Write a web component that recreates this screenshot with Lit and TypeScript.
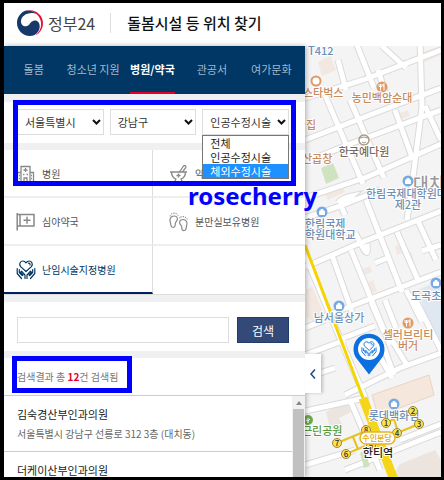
import { LitElement, html, css, svg } from "lit";
import { customElement, state } from "lit/decorators.js";

const heartHands = svg`
  <g fill="none" stroke="currentColor" stroke-width="1.2" stroke-linecap="round" stroke-linejoin="round">
    <path d="M10 11.500 4.600 6.600C2.600 4 4.400 1 7 1c1.400 0 2.300.8 3 1.800C10.700 1.800 11.600 1 13 1c2.600 0 4.400 3 2.400 5.600Z"/>
    <path d="M12.500 3.200c1.200-.2 1.800.8 1.500 1.800"/>
    <path d="M1.200 8.500v5l4.300 5M3.300 9.500v3l3 3M9 18.500v-3.500L5.500 11.200 4.600 12.200 7 15"/>
    <path d="M18.800 8.500v5l-4.300 5M16.700 9.500v3l-3 3M11 18.500v-3.500l3.500-3.800.9 1L13 15"/>
  </g>`;

const icons = {
  hospital: svg`
    <g fill="none" stroke="currentColor" stroke-width="1.3">
      <path d="M5 18V2.500h9V18M5 8.500H1.500V18M14 8.500h3.500V18M1 18h17M8 18v-4h3v4"/>
      <path d="M9.500 4v4M7.500 6h4M7 10.500h1.500M10.500 10.500H12M3 11.500h1M3 14.500h1M15 11.500h1M15 14.500h1"/>
    </g>`,
  mortar: svg`
    <g fill="none" stroke="currentColor" stroke-width="1.3" stroke-linejoin="round">
      <path d="M1 8h17M2.500 8c0 4 2 6 4.500 7l-1.500 3h8L12 15c2.500-1 4.500-3 4.500-7M9.500 9.500v4M7.500 11.500h4"/>
      <path d="M10.500 8 14.500 2c1.200-1.200 3 .2 2.200 1.600L13.500 8"/>
    </g>`,
  sign: svg`
    <g fill="none" stroke="currentColor" stroke-width="1.5">
      <path d="M1.200 1v17.500M1 2.500h3M1 14h3M4 2.500h14V14H4Z"/>
      <path d="M11 4.800v7M7.500 8.300h7"/>
    </g>`,
  feet: svg`
    <g fill="none" stroke="currentColor" stroke-width="1.2">
      <path d="M5 4C1.500 4 .3 7.500 1.300 10.300c.7 1.800 0 3.500 1.700 4.700 2 1 3.600-.5 3.200-2.600-.4-2.200 2.200-3 2.200-5.400C8.400 5.200 6.800 4 5 4Z"/>
      <path d="M14 7.500c3.500 0 4.700 3.500 3.700 6.100-.7 1.600 0 3.400-1.700 4.600-2 1-3.600-.5-3.200-2.600.4-2-2.200-2.700-2.200-5 0-2 1.600-3.100 3.400-3.100Z"/>
      <path d="M.8 3.500l.7.600M2.500 1.400l.4 1M5 .6v1.200M7.300 1.200l-.3 1M9.200 2.800l-.6.700M10.500 5.500l.6.700M12 4.300l.3 1M14.300 4v1.200M16.500 4.800l-.3 1M18.500 6.600l-.7.600"/>
    </g>`,
  care: heartHands,
};

type Category = { id: keyof typeof icons; name: string };

const categories: Category[] = [
  { id: "hospital", name: "병원" },
  { id: "mortar", name: "약국" },
  { id: "sign", name: "심야약국" },
  { id: "feet", name: "분만실보유병원" },
  { id: "care", name: "난임시술지정병원" },
];

const roads = `
  M305 98 363 80 441 50 M305 140 375 113 441 88 M305 162 350 144 441 110
  M305 198 367 177 441 144 M305 218 340 206 380 190 M305 267 360 243 441 211 M325 316 370 299 441 272
  M338 340 375 326 M345 395 400 368 441 353 M305 411 365 398 M400 440 441 424 M345 470 441 432
  M355 40 374 88 M325 95 363 184 M338 60 346 90 M350 100 384 178 M378 70 387 98 M395 110 413 160
  M366 200 402 292 M420 40 422 107 412 185 407 220 M425 106 441 140 M406 68 382 46 M397 232 418 280
  M417 219 436 260 M332 255 352 312 M351 250 390 345 M371 302 384 332 M385 300 396 328
  M406 290 422 322 M305 255 366 400 M355 233 362 246Q369 260 367 244 M375 263 390 257
  M422 251 441 245 M342 205 352 196Q342 198 338 203 M341 206 345 215
  M305 355 345 340 M376 350 392 378 M383 345 394 375 M305 328 325 320 M350 400 380 470
  M305 378 335 368 M305 465 355 450 M392 340 408 367 M412 293 441 350`;

const exits = [[386, 423, 1], [413, 411, 2], [419, 424, 3], [397, 433, 4], [371, 446, 5], [346, 454, 6], [337, 443, 7], [366, 430, 8]];

@customElement("area-map")
export class AreaMap extends LitElement {
  static styles = css`
    :host { display: block; overflow: hidden; background: #f4f4f4; }
    .map { display: block; width: 100%; height: 100%; font-family: "Noto Sans CJK KR", sans-serif; }
    .casing { stroke: #dadada; stroke-width: 7; fill: none; }
    .road { stroke: #fff; stroke-width: 5; fill: none; }
    .label { font-size: 11px; font-weight: 500; text-anchor: middle; stroke: #fff; stroke-width: 2px; paint-order: stroke; stroke-linejoin: round; }
    .start { text-anchor: start; }
    .food { fill: #c98a5c; }
    .place { fill: #6d8fb5; }
    .tea { fill: #77695f; }
    .park { fill: #559c3c; }
    .station { fill: #222; }
    .district { font-size: 17px; fill: #999; }
    .exit { font-size: 8px; font-weight: 500; text-anchor: middle; fill: #333; }
    .line { font-size: 8px; font-weight: 500; text-anchor: middle; fill: #e0a800; }
    .pin { color: #0b6fe0; }
  `;

  private fork(x: number, y: number) {
    return svg`<circle cx=${x} cy=${y} r="5.5" fill="#e09a66"/>
      <path d="M${x - 3} ${y - 3}v2.500h3v-2.500M${x - 1.5} ${y - 3}v6.500M${x + 2} ${y + 3.5}v-7c-1 1-1 3 0 3.500" fill="none" stroke="#fff"/>`;
  }

  private spot(x: number, y: number) {
    return svg`<circle cx=${x} cy=${y} r="5.5" fill="#78a9e0"/>
      <path d="M${x - 2.5} ${y - 1}h5v3.500h-5ZM${x - 1} ${y - 1}v-1.500h2v1.500" fill="#fff" stroke="#fff"/>`;
  }

  render() {
    return html`
      <svg class="map" viewBox="305 46 136 431" preserveAspectRatio="xMinYMin slice" role="img" aria-label="지도">
        <rect x="305" y="46" width="136" height="431" fill="#f4f4f4"/>
        <path d="M418 290 441 280V345L432 337Z" fill="#dfe7f1"/>
        <path d="M318 62 330 56 336 70 322 76ZM400 113l8-3 2 6-8 3ZM420 53 441 46V55L424 62ZM325 194 343 187 345 192 328 200ZM361 270l9-4 2 6-9 4ZM364 284l9-4 4 11-9 4ZM395 246l4-1 3 8-5 2ZM405 254l6-2 3 10-6 2ZM306 290l6-4 12 28-8 10-10-8Z" fill="#f2e8e1"/>
        <path d="M326 412l20-10 5 10-12 6 4 9-12 5ZM400 464l35-14 6 10V477H392Z" fill="#ece4df"/>
        <path class="casing" d=${roads}/>
        <path class="road" d=${roads}/>
        <path d="M321 168 333 163 339 178 326 184Z" fill="#cfe3c1"/>
        <path d="M360 453l5-2 5 15-6 2Z" fill="#cfe3c1"/>
        <path d="M372 395 429 375 434 395 378 416Z" fill="#f5e7dc" stroke="#e6d5c8"/>
        <path d="M305 245 341 340 363 398" fill="none" stroke="#f4d500" stroke-width="3"/>
        <path d="M363 398 394 480" fill="none" stroke="#f5d519" stroke-width="9"/>
        <path d="M337 443 366 431M346 454 365 446M353 437 358 449M397 433 419 424M386 423 394 419 398 432" fill="none" stroke="#e5c21d" stroke-width="2"/>

        <circle cx="316" cy="81" r="4.5" fill="#fff" stroke="#e09a66" stroke-width="2"/>
        ${this.fork(382, 87)} ${this.fork(408, 323)}
        <circle cx="364" cy="140" r="5" fill="#fff" stroke="#a89886" stroke-width="1.5"/>
        <path d="M360 138q4-2 8 0M362 142q2 2 4 0" fill="none" stroke="#a89886"/>
        <text class="label district start" x="413" y="190">대치</text>
        ${this.spot(408, 181)} ${this.spot(322, 212)} ${this.spot(436, 283)}
        ${this.spot(339, 306)} ${this.spot(394, 404)}
        <circle cx="308" cy="420" r="5" fill="#6cab4c"/>
        <path d="M308 423v-5M306 420l2 1 2-2" fill="none" stroke="#fff"/>

        <text class="label place start" x="308" y="55">T412</text>
        <text class="label food start" x="303" y="97">스타벅스</text>
        <text class="label food" x="382" y="102">농민백암순대</text>
        <text class="label food start" x="306" y="129">집</text>
        <text class="label food start" x="302" y="163">산곱창</text>
        <text class="label tea" x="364" y="156">한국예다원</text>
        <text class="label place start" x="366" y="198">한림국제대학원대학</text>
        <text class="label place" x="408" y="209">제2관</text>
        <text class="label place start" x="305" y="228">한림국제</text>
        <text class="label place start" x="305" y="239">학원대학교</text>
        <text class="label place start" x="411" y="300">도곡초등</text>
        <text class="label place" x="339" y="322">남서울상가</text>
        <text class="label food" x="408" y="339">셀러브리티</text>
        <text class="label food" x="408" y="350">버거</text>
        <text class="label place" x="394" y="420">롯데백화점</text>
        <text class="label park start" x="302" y="435">근린공원</text>

        ${exits.map(([x, y, n]) => svg`
          <circle cx=${x} cy=${y} r="4.5" fill="#ffe14a" stroke="#9c8636"/>
          <text class="exit" x=${x} y=${y + 3}>${n}</text>`)}
        <rect x="360" y="432" width="35" height="12" rx="6" fill="#fff" stroke="#e6b422" stroke-width="1.5"/>
        <text class="line" x="377" y="441">수인분당</text>
        <text class="label station" x="378" y="457">한티역</text>

        <path d="M369 374.500 357 359a15.500 15.500 0 1 1 24 0Z" fill="#0b6fe0"/>
        <circle cx="369" cy="349" r="11" fill="#fff"/>
        <svg class="pin" x="361" y="341" width="16" height="16" viewBox="0 0 20 20">${heartHands}</svg>
      </svg>`;
  }
}

@customElement("app-root")
export class AppRoot extends LitElement {
  @state() private category = "care";

  static styles = css`
    :host { display: block; font-family: "Noto Sans CJK KR", sans-serif; color: #333; }
    * { box-sizing: border-box; }
    button, input, select { font-family: inherit; margin: 0; }
    .frame { position: relative; display: flex; flex-direction: column; height: 100vh; border: solid #000; border-width: 3px 3px 3px 4px; background: #fff; overflow: hidden; }
    .header { display: flex; align-items: center; flex: 0 0 43px; padding: 0 13px 4px; white-space: nowrap; }
    .brand { display: flex; align-items: center; gap: 5px; font-size: 16px; line-height: 24px; color: #444; text-decoration: none; }
    .emblem { width: 26px; height: 26px; }
    .title { margin: 0 0 0 15px; padding-left: 16px; border-left: 1px solid #ddd; font-size: 15px; line-height: 20px; font-weight: 500; color: #111; }
    .body { flex: 1; min-height: 0; display: grid; grid-template-columns: minmax(0, 301fr) minmax(0, 136fr); grid-template-rows: minmax(0, 1fr); }
    .panel { position: relative; z-index: 1; display: flex; flex-direction: column; min-height: 0; background: #eef0f2; box-shadow: 1px 0 5px rgba(0, 0, 0, .3); }
    .tabs { flex: none; display: grid; grid-template-columns: repeat(5, 1fr); height: 48px; padding-right: 4px; background: #003764; }
    .tab { display: flex; justify-content: center; text-decoration: none; white-space: nowrap; font-size: 11px; line-height: 46px; color: #a3b9cd; }
    .tab.on { font-weight: 700; color: #fff; }
    .tab.on span { border-bottom: 2px solid #e60028; }
    .filters { position: relative; flex: none; display: grid; grid-template-columns: repeat(3, 1fr); gap: 6px; margin-top: 8px; padding: 7px 16px 8px 13px; background: #fff; }
    .select { position: relative; display: flex; }
    .select select { appearance: none; width: 100%; height: 26px; padding: 0 7px; border: 1px solid #ddd; border-radius: 0; background: #fff; font-size: 11px; color: #333; }
    .chevron { position: absolute; right: 3px; top: 9px; width: 9px; height: 8px; pointer-events: none; }
    .menu { position: absolute; z-index: 3; top: 26px; left: 0; right: 0; margin: 0; padding: 0; list-style: none; border: 1px solid #777; background: #fff; font-size: 11px; line-height: 14px; color: #222; }
    .menu li { padding: 0 7px; }
    .menu .picked { background: #1e90ff; color: #fff; }
    .grid { flex: none; display: grid; grid-template-columns: 149fr 152fr; margin-top: 7px; background: #fff; border-bottom: 1px solid #ddd; }
    .cell { display: flex; align-items: center; gap: 7px; height: 48px; padding: 0 12px; border: 0; border-bottom: 2px solid #eee; border-radius: 0; background: #fff; font-size: 10px; color: #555; text-align: left; white-space: nowrap; }
    .cell:nth-child(odd) { border-right: 1px solid #ddd; }
    .cell:nth-child(even) { padding-left: 16px; }
    .cell:nth-child(n + 5) { border-bottom-color: #fff; }
    .cell.on { border-bottom-color: #001f63; color: #003764; }
    .icon { width: 19px; height: 19px; flex: none; color: #888; overflow: visible; }
    .on .icon { color: #003764; }
    .search { flex: none; display: flex; gap: 8px; margin-top: 7px; padding: 15px 16px 8px 13px; background: #fff; }
    .query { flex: 1; min-width: 0; height: 26px; border: 1px solid #ddd; border-radius: 0; padding: 0 8px; font-size: 11px; }
    .go { width: 52px; height: 26px; border: 1px solid #1f3d66; border-radius: 0; padding: 0; background: #334a78; color: #fff; font-size: 12px; }
    .count { position: relative; flex: none; margin: 7px 0 0; padding: 9px 13px 8px; background: #fff; border-bottom: 1px solid #ccc; font-size: 10px; line-height: 20px; color: #777; }
    .count b { color: #e60028; }
    .results { flex: 1; min-height: 0; display: flex; background: #fff; overflow: hidden; }
    .list { flex: 1; margin: 0; padding: 0; list-style: none; }
    .item { padding: 9px 13px 8px; border-bottom: 1px solid #ccc; }
    .name { margin: 0; font-size: 11px; line-height: 19px; font-weight: 400; color: #222; }
    .address { margin: 0; font-size: 10px; line-height: 19px; color: #666; }
    .scroll { width: 13px; padding: 0 1px; background: #f1f1f1; }
    .arrow { display: block; width: 11px; height: 13px; }
    .thumb { height: 100%; background: #c1c1c1; }
    .fold { position: absolute; left: 100%; top: 308px; width: 16px; height: 39px; border: 0; padding: 0; background: #fff; box-shadow: 2px 0 3px rgba(0, 0, 0, .2); }
    .fold svg { display: block; width: 16px; height: 12px; }
    .mark { position: absolute; z-index: 4; border: 5px solid #00f; pointer-events: none; }
    .mark-filters { top: -2px; left: 9px; right: 9px; height: 86px; }
    .mark-count { top: -2px; left: 8px; width: 120px; height: 37px; }
    .sign { position: absolute; z-index: 4; top: 80px; left: 184px; font-family: "Noto Sans", sans-serif; font-size: 24px; line-height: 28px; font-weight: 700; color: #00f; }
  `;

  private select(id: string, label: string, options: string[], value: string, open = false) {
    return html`
      <div class="select">
        <select id=${id} aria-label=${label}>
          ${options.map((o) => html`<option ?selected=${o === value}>${o}</option>`)}
        </select>
        <svg class="chevron" viewBox="0 0 9 8" aria-hidden="true"><path d="M1 2l3.500 3.500L8 2" fill="none" stroke="#111" stroke-width="2"/></svg>
        ${open
          ? html`<ul class="menu">${options.map((o) => html`<li class=${o === "체외수정시술" ? "picked" : ""}>${o}</li>`)}</ul>`
          : null}
      </div>`;
  }

  render() {
    const tabs = ["돌봄", "청소년 지원", "병원/약국", "관공서", "여가문화"];
    return html`
      <div class="frame">
        <header class="header">
          <a class="brand" href="#">
            <svg class="emblem" viewBox="0 0 26 26" aria-hidden="true">
              <path d="M10 .4C18-1.200 26 4.600 26 13c0 5.500-3 10.300-7.500 12.500C22.600 22 24.600 17.500 24 12.500 23.200 5.500 17.500.8 10 .4Z" fill="#e8112d"/>
              <path d="M9 .6C3.800 2.300 0 7.200 0 13c0 7.200 5.800 13 13 13 6 0 9.700-4.600 9.700-9.700 0-3.300-2-5.700-4.600-5.700-5.300 0-4.700 5.700-9.400 5.700-3 0-4.700-2.200-4.700-4.800C4 6.500 9 3 14.500 3c2 0 3.500.4 5 1.200C17 1.500 13 0 9 .6Z" fill="#17386b"/>
            </svg>
            <span>정부24</span>
          </a>
          <h1 class="title">돌봄시설 등 위치 찾기</h1>
        </header>
        <div class="body">
          <main class="panel">
            <nav class="tabs">
              ${tabs.map((t) => html`<a href="#" class="tab ${t === "병원/약국" ? "on" : ""}"><span>${t}</span></a>`)}
            </nav>
            <div class="filters">
              ${this.select("city", "시도", ["서울특별시"], "서울특별시")}
              ${this.select("district", "시군구", ["강남구"], "강남구")}
              ${this.select("treatment", "시술", ["전체", "인공수정시술", "체외수정시술"], "인공수정시술", true)}
              <div class="mark mark-filters"></div>
              <span class="sign">rosecherry</span>
            </div>
            <div class="grid">
              ${categories.map((c) => html`
                <button class="cell ${c.id === this.category ? "on" : ""}" @click=${() => (this.category = c.id)}>
                  <svg class="icon" viewBox="0 0 19 19" aria-hidden="true">${icons[c.id]}</svg>
                  <span>${c.name}</span>
                </button>`)}
            </div>
            <form class="search" @submit=${(e: Event) => e.preventDefault()}>
              <input class="query" type="text" aria-label="검색어" />
              <button class="go">검색</button>
            </form>
            <p class="count">검색결과 총 <b>12</b>건 검색됨<span class="mark mark-count"></span></p>
            <div class="results">
              <ul class="list">
                <li class="item">
                  <h2 class="name">김숙경산부인과의원</h2>
                  <p class="address">서울특별시 강남구 선릉로 312 3층 (대치동)</p>
                </li>
                <li class="item"><h2 class="name">더케이산부인과의원</h2></li>
              </ul>
              <div class="scroll">
                <svg class="arrow" viewBox="0 0 11 13" aria-hidden="true"><path d="M3 9h6L6 5Z" fill="#888"/></svg>
                <div class="thumb"></div>
              </div>
            </div>
            <button class="fold" aria-label="패널 접기">
              <svg viewBox="0 0 16 12" aria-hidden="true"><path d="M10 1.500 6 6l4 4.500" fill="none" stroke="#1f4a7a" stroke-width="1.5"/></svg>
            </button>
          </main>
          <area-map></area-map>
        </div>
      </div>`;
  }
}
